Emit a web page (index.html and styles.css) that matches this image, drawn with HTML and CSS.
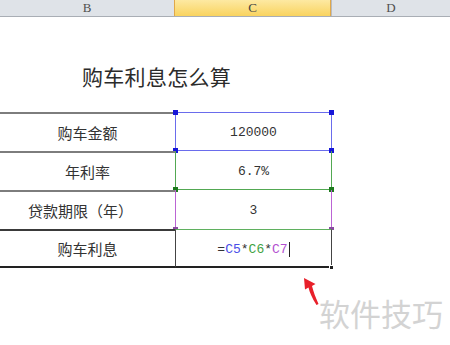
FILE: index.html
```html
<!DOCTYPE html>
<html lang="zh">
<head>
  <meta charset="UTF-8">
  <title>购车利息怎么算</title>
  <link rel="stylesheet" href="styles.css">
</head>
<body>

  <div class="colhead">
    <div class="ch ch-b">B</div>
    <div class="ch ch-c">C</div>
    <div class="ch ch-d">D</div>
  </div>

  <div class="sheet">
    <div class="title">购车利息怎么算</div>

    <div class="grid">
      <div class="cell lbl">购车金额</div>
      <div class="cell val ref-blue">120000
        <i class="dot blue tl"></i><i class="dot blue tr"></i><i class="dot blue bl"></i><i class="dot blue br"></i>
      </div>

      <div class="cell lbl">年利率</div>
      <div class="cell val ref-green">6.7%
        <i class="dot green bl"></i><i class="dot green br"></i>
      </div>

      <div class="cell lbl paren">贷款期限（年）</div>
      <div class="cell val ref-purple">3
        <i class="dot purple bl"></i><i class="dot purple br"></i>
      </div>

      <div class="cell lbl last">购车利息</div>
      <div class="cell val active">=<span class="c-blue">C5</span>*<span class="c-green">C6</span>*<span class="c-purple">C7</span><span class="caret"></span>
        <i class="fill"></i>
      </div>
    </div>

    <svg class="arrow" width="24" height="30" viewBox="0 0 24 30">
      <path d="M2 1 L13.5 7 L10 9 C11.5 15 13.5 20 16.5 27 L14.5 28 C10 21 7.5 15 6.5 10.5 L3 12.5 Z" fill="#e8202a"/>
    </svg>

    <div class="mark">软件技巧</div>
  </div>

</body>
</html>
```

FILE: styles.css
```css
body {
  margin: 0;
  padding: 0;
  background: #fff;
  width: 450px;
  height: 345px;
  overflow: hidden;
  font-family: "Noto Sans CJK SC", "DejaVu Sans", sans-serif;
}

.colhead {
  display: flex;
  height: 16px;
  background: #dfe3e8;
  border-bottom: 1px solid #a9aeb5;
}

.ch {
  font-family: "Liberation Serif", serif;
  font-size: 13px;
  line-height: 16px;
  text-align: center;
  color: #4f4f4f;
}

.ch-b {
  width: 174px;
  border-right: 1px solid #b9bdc3;
}

.ch-c {
  width: 155px;
  background: linear-gradient(#fde9a2, #f9d35f);
  border-right: 1px solid #e0a84a;
  border-left: 1px solid #e0a84a;
  margin-left: -1px;
  color: #444;
}

.ch-d {
  flex: 1;
  border-left: 1px solid #b9bdc3;
}

.sheet {
  position: relative;
  height: 328px;
}

.title {
  height: 95px;
  padding-left: 82px;
  box-sizing: border-box;
  padding-top: 44px;
  font-size: 21px;
  line-height: 30px;
  letter-spacing: 0.3px;
  color: #2b2b2b;
}

.grid {
  display: grid;
  grid-template-columns: 175px 157px;
  grid-auto-rows: 39px;
}

.cell {
  position: relative;
  display: flex;
  align-items: center;
  justify-content: center;
  box-sizing: border-box;
  color: #333;
}

.lbl {
  font-size: 15px;
  border-top: 2px solid #7d7d7d;
}

.lbl.paren {
  padding-right: 14px;
}

.lbl.last {
  border-top-color: #3a3a3a;
  border-bottom: 2px solid #222;
}

.val {
  font-family: "Liberation Mono", monospace;
  font-size: 13px;
  padding-top: 2px;
}

.ref-blue {
  border: 1px solid #6a6cec;
}

.ref-green {
  border: 1px solid #52a852;
  border-top: none;
}

.ref-purple {
  border: 1px solid #bb64d4;
  border-top: none;
  border-bottom: none;
}

.active {
  border: 1px solid #444;
  border-top: 1px solid #5fb05f;
  border-bottom: 2px solid #222;
}

.c-blue { color: #4a4ee8; }
.c-green { color: #3fa23f; }
.c-purple { color: #b24fd0; }

.caret {
  display: inline-block;
  width: 1px;
  height: 15px;
  background: #222;
  margin-left: 1px;
}

.dot {
  position: absolute;
  width: 5px;
  height: 5px;
}

.dot.blue { background: #1616d8; }
.dot.green { background: #1d7a1d; }
.dot.purple { background: #8a4aa0; height: 3px; }

.tl { left: -3px; top: -3px; }
.tr { right: -3px; top: -3px; }
.bl { left: -3px; bottom: -3px; }
.br { right: -3px; bottom: -3px; }

.dot.purple.bl, .dot.purple.br { bottom: -1px; }

.fill {
  position: absolute;
  right: -3px;
  bottom: -4px;
  width: 5px;
  height: 5px;
  background: #222;
  border: 1px solid #fff;
  box-sizing: border-box;
}

.arrow {
  position: absolute;
  left: 302px;
  top: 260px;
}

.mark {
  position: absolute;
  left: 319px;
  top: 276px;
  font-size: 31px;
  line-height: 40px;
  color: #d3d3d3;
  letter-spacing: 0;
}
```
